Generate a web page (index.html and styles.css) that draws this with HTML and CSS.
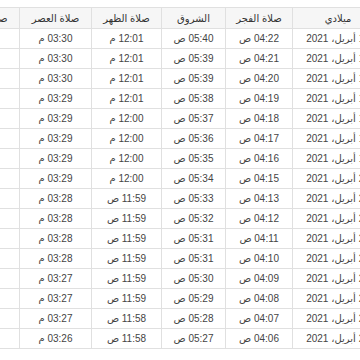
FILE: index.html
```html
<!DOCTYPE html>
<html lang="ar" dir="rtl">
<head>
<meta charset="utf-8">
<link rel="stylesheet" href="styles.css">
</head>
<body>
<div class="viewport">
<table class="times">
<colgroup>
<col class="c-date"><col class="c-fajr"><col class="c-sun"><col class="c-dhuhr"><col class="c-asr"><col class="c-magh"><col class="c-isha">
</colgroup>
<thead>
<tr><th>ميلادي</th><th>صلاة الفجر</th><th>الشروق</th><th>صلاة الظهر</th><th>صلاة العصر</th><th>صلاة المغرب</th><th>صلاة العشاء</th></tr>
</thead>
<tbody>
<tr><td>13 أبريل، 2021</td><td>04:22 ص</td><td>05:40 ص</td><td>12:01 م</td><td>03:30 م</td><td>06:22 م</td><td>07:41 م</td></tr>
<tr><td>14 أبريل، 2021</td><td>04:21 ص</td><td>05:39 ص</td><td>12:01 م</td><td>03:30 م</td><td>06:23 م</td><td>07:42 م</td></tr>
<tr><td>15 أبريل، 2021</td><td>04:20 ص</td><td>05:39 ص</td><td>12:01 م</td><td>03:30 م</td><td>06:23 م</td><td>07:42 م</td></tr>
<tr><td>16 أبريل، 2021</td><td>04:19 ص</td><td>05:38 ص</td><td>12:01 م</td><td>03:29 م</td><td>06:24 م</td><td>07:43 م</td></tr>
<tr><td>17 أبريل، 2021</td><td>04:18 ص</td><td>05:37 ص</td><td>12:00 م</td><td>03:29 م</td><td>06:24 م</td><td>07:44 م</td></tr>
<tr><td>18 أبريل، 2021</td><td>04:17 ص</td><td>05:36 ص</td><td>12:00 م</td><td>03:29 م</td><td>06:25 م</td><td>07:44 م</td></tr>
<tr><td>19 أبريل، 2021</td><td>04:16 ص</td><td>05:35 ص</td><td>12:00 م</td><td>03:29 م</td><td>06:26 م</td><td>07:45 م</td></tr>
<tr><td>20 أبريل، 2021</td><td>04:15 ص</td><td>05:34 ص</td><td>12:00 م</td><td>03:29 م</td><td>06:26 م</td><td>07:46 م</td></tr>
<tr><td>21 أبريل، 2021</td><td>04:13 ص</td><td>05:33 ص</td><td>11:59 ص</td><td>03:28 م</td><td>06:27 م</td><td>07:47 م</td></tr>
<tr><td>22 أبريل، 2021</td><td>04:12 ص</td><td>05:32 ص</td><td>11:59 ص</td><td>03:28 م</td><td>06:27 م</td><td>07:47 م</td></tr>
<tr><td>23 أبريل، 2021</td><td>04:11 ص</td><td>05:31 ص</td><td>11:59 ص</td><td>03:28 م</td><td>06:28 م</td><td>07:48 م</td></tr>
<tr><td>24 أبريل، 2021</td><td>04:10 ص</td><td>05:31 ص</td><td>11:59 ص</td><td>03:28 م</td><td>06:29 م</td><td>07:49 م</td></tr>
<tr><td>25 أبريل، 2021</td><td>04:09 ص</td><td>05:30 ص</td><td>11:59 ص</td><td>03:27 م</td><td>06:29 م</td><td>07:50 م</td></tr>
<tr><td>26 أبريل، 2021</td><td>04:08 ص</td><td>05:29 ص</td><td>11:59 ص</td><td>03:27 م</td><td>06:30 م</td><td>07:50 م</td></tr>
<tr><td>27 أبريل، 2021</td><td>04:07 ص</td><td>05:28 ص</td><td>11:58 ص</td><td>03:27 م</td><td>06:30 م</td><td>07:51 م</td></tr>
<tr><td>28 أبريل، 2021</td><td>04:06 ص</td><td>05:27 ص</td><td>11:58 ص</td><td>03:26 م</td><td>06:31 م</td><td>07:52 م</td></tr>
</tbody>
</table>
</div>
</body>
</html>
```
FILE: styles.css
```css
html, body {
  margin: 0;
  padding: 0;
  background: #fff;
}
.viewport {
  width: 360px;
  height: 360px;
  overflow: hidden;
  direction: rtl;
  padding-top: 7px;
  box-sizing: border-box;
}
.times {
  border-collapse: collapse;
  table-layout: fixed;
  width: 521px;
  margin-right: -24px;
  font-family: "Liberation Sans", "DejaVu Sans", sans-serif;
  font-size: 10px;
  color: #444;
}
.c-date { width: 91px; }
.c-fajr { width: 67px; }
.c-sun { width: 64px; }
.c-dhuhr { width: 70px; }
.c-asr { width: 72px; }
.c-magh { width: 78px; }
.c-isha { width: 79px; }
.times th,
.times td {
  border: 1px solid #e0e0e0;
  text-align: center;
  padding: 0;
  white-space: nowrap;
}
.times th {
  height: 20px;
  background: #f6f6f6;
  font-weight: normal;
  color: #333;
}
.times td {
  height: 19px;
}
```
